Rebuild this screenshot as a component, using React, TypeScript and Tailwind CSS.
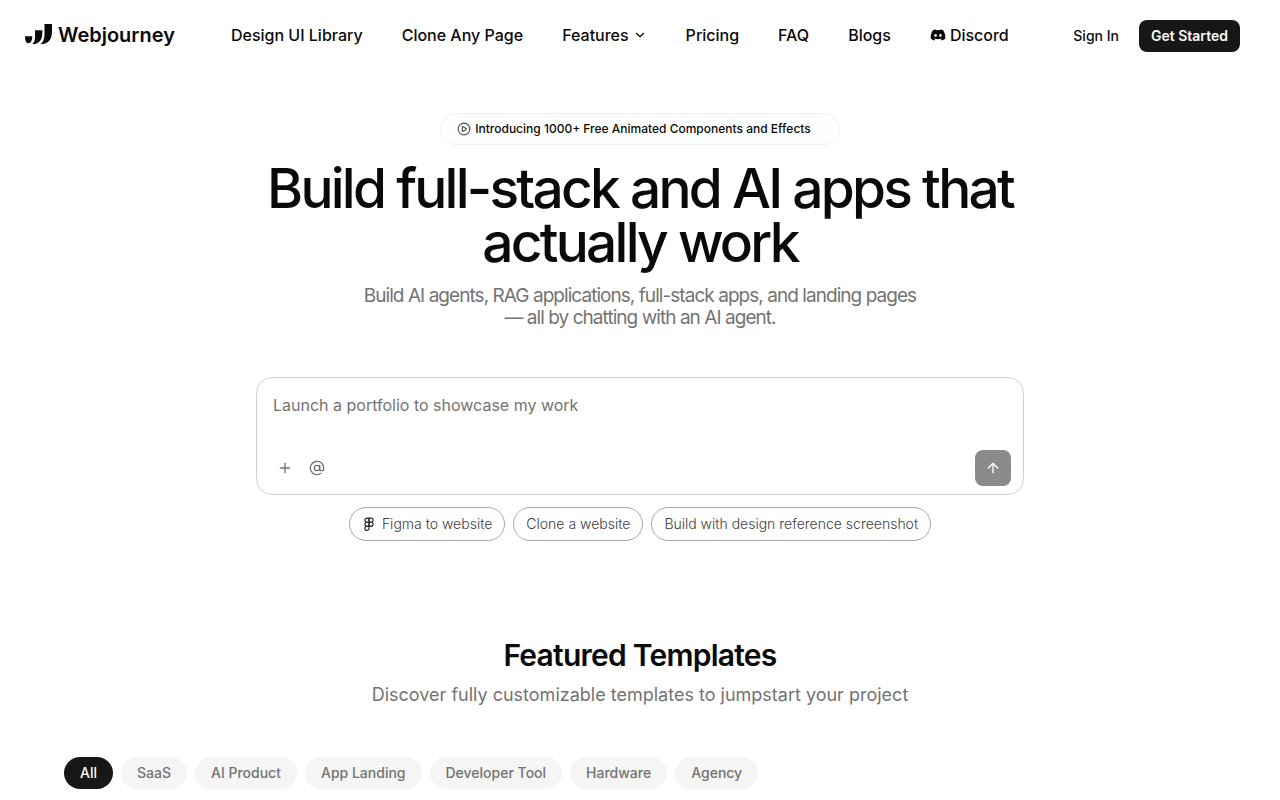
import { ArrowUp, AtSign, ChevronDown, CirclePlay, Figma, Plus } from "lucide-react";
import { FaDiscord } from "react-icons/fa";

const categories = ["All", "SaaS", "AI Product", "App Landing", "Developer Tool", "Hardware", "Agency"];

function Logo() {
  return (
    <a href="#" className="flex items-center gap-1.5 text-xl leading-6 font-semibold">
      <svg viewBox="0 0 27 22" className="h-[22px] w-[27px]" fill="currentColor" aria-hidden="true">
        <path d="M0 12.300H7.300C7.300 16 6 19.300 3.200 19.300C1 19.300 0 16.500 0 12.300Z" />
        <path d="M10 6.300H17.300V9C17.300 16 14 20.200 7.200 20.200C9.300 18.500 10 16 10 12Z" />
        <path d="M19.500 0H27V7C27 15.500 23.500 20.200 15.500 20.200C18.500 18 19.500 14.500 19.500 10Z" />
      </svg>
      Webjourney
    </a>
  );
}

function Header() {
  return (
    <header className="flex h-18 items-center justify-between pr-10 pl-[25px]">
      <div className="flex items-center gap-14 pb-0.5">
        <Logo />
        <nav className="flex items-center gap-[39px] text-base font-[450]">
          <a href="#library">Design UI Library</a>
          <a href="#clone">Clone Any Page</a>
          <button type="button" className="flex items-center gap-1">
            Features
            <ChevronDown size={14} />
          </button>
          <a href="#pricing">Pricing</a>
          <a href="#faq">FAQ</a>
          <a href="#blogs">Blogs</a>
          <a href="#discord" className="flex items-center gap-1">
            <FaDiscord size={16} />
            Discord
          </a>
        </nav>
      </div>
      <div className="flex items-center gap-5 text-sm">
        <a href="#signin" className="font-[450]">Sign In</a>
        <a href="#start" className="flex h-8 items-center rounded-lg bg-[#171717] px-3 font-semibold text-neutral-50">
          Get Started
        </a>
      </div>
    </header>
  );
}

function Prompt() {
  return (
    <form className="flex w-full max-w-3xl flex-col rounded-2xl border border-[#d2d2d2] pt-4 pr-3 pb-2 pl-4">
      <textarea
        aria-label="Describe your project"
        placeholder="Launch a portfolio to showcase my work"
        className="h-14 w-full resize-none text-base leading-[22px] outline-none placeholder:text-[#737373]"
      />
      <div className="flex items-center text-[#737373]">
        <button type="button" aria-label="Add attachment" className="flex h-6 w-6 items-center justify-center">
          <Plus size={16} />
        </button>
        <button type="button" aria-label="Mention" className="ml-2 flex h-6 w-6 items-center justify-center">
          <AtSign size={16} />
        </button>
        <button
          type="submit"
          aria-label="Send"
          className="ml-auto flex h-9 w-9 items-center justify-center rounded-lg bg-[#8b8b8b] text-white"
        >
          <ArrowUp size={16} />
        </button>
      </div>
    </form>
  );
}

const chip = "flex h-[34px] items-center gap-1.5 rounded-full border border-[#aaaaaa] px-3";

export default function App() {
  return (
    <div className="min-h-screen bg-white font-['Inter',sans-serif] text-neutral-950">
      <Header />
      <main>
        <section className="flex flex-col items-center px-6 pt-[41px]">
          <a
            href="#components"
            className="flex h-8 items-center gap-1 rounded-full border border-[#f0f2f2] bg-[#fdfefe] pr-7 pl-4 text-xs font-medium"
          >
            <CirclePlay size={14} className="text-neutral-600" />
            Introducing 1000+ Free Animated Components and Effects
          </a>
          <h1 className="mt-4 max-w-3xl text-center text-[55px] leading-[54px] font-medium tracking-tighter">
            Build full-stack and AI apps that actually work
          </h1>
          <p className="mt-4 max-w-[570px] text-center text-[19px] leading-[22px] tracking-tighter text-[#737373]">
            Build AI agents, RAG applications, full-stack apps, and landing pages — all by chatting with an AI agent.
          </p>
          <div className="mt-12 flex w-full justify-center">
            <Prompt />
          </div>
          <div className="mt-3 flex flex-wrap justify-center gap-2 text-sm font-light text-neutral-700">
            <button type="button" className={chip}>
              <Figma size={14} className="text-neutral-800" />
              Figma to website
            </button>
            <button type="button" className={chip}>Clone a website</button>
            <button type="button" className={chip}>Build with design reference screenshot</button>
          </div>
        </section>
        <section className="px-16 pt-24 pb-3">
          <h2 className="text-center text-3xl font-semibold tracking-tight">Featured Templates</h2>
          <p className="mt-2 text-center text-lg text-[#737373]">
            Discover fully customizable templates to jumpstart your project
          </p>
          <div className="mt-12 flex flex-wrap gap-2 text-sm font-[450]">
            {categories.map((name, i) => (
              <button
                key={name}
                type="button"
                className={
                  i === 0
                    ? "h-8 rounded-full bg-[#171717] px-4 text-neutral-50"
                    : "h-8 rounded-full bg-neutral-100 px-4 text-[#737373]"
                }
              >
                {name}
              </button>
            ))}
          </div>
        </section>
      </main>
    </div>
  );
}
